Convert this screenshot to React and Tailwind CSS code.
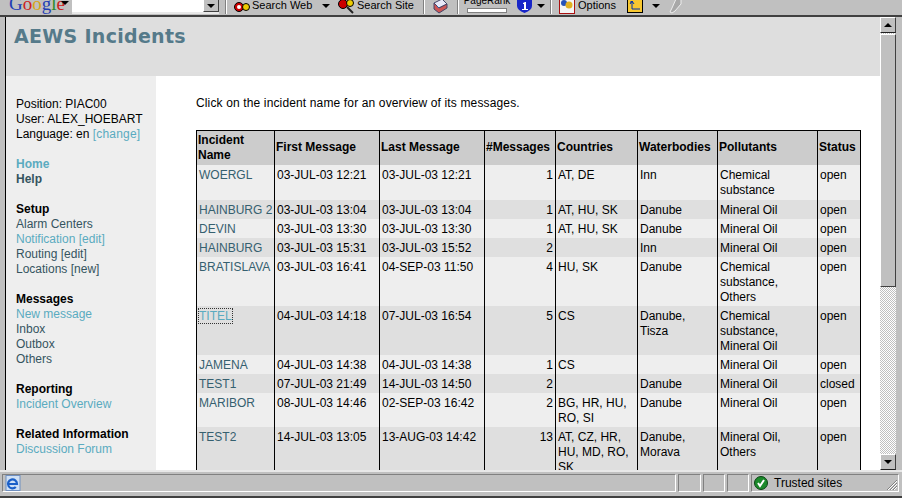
const rows = [
  { name: 'WOERGL', first: '03-JUL-03 12:21', last: '03-JUL-03 12:21', count: 1, countries: 'AT, DE', water: 'Inn', poll: ['Chemical', 'substance'], status: 'open', h: 'h-[35px]' },
  { name: 'HAINBURG 2', first: '03-JUL-03 13:04', last: '03-JUL-03 13:04', count: 1, countries: 'AT, HU, SK', water: 'Danube', poll: ['Mineral Oil'], status: 'open', h: 'h-[19px]' },
  { name: 'DEVIN', first: '03-JUL-03 13:30', last: '03-JUL-03 13:30', count: 1, countries: 'AT, HU, SK', water: 'Danube', poll: ['Mineral Oil'], status: 'open', h: 'h-[19px]' },
  { name: 'HAINBURG', first: '03-JUL-03 15:31', last: '03-JUL-03 15:52', count: 2, countries: '', water: 'Inn', poll: ['Mineral Oil'], status: 'open', h: 'h-[19px]' },
  { name: 'BRATISLAVA', first: '03-JUL-03 16:41', last: '04-SEP-03 11:50', count: 4, countries: 'HU, SK', water: 'Danube', poll: ['Chemical', 'substance,', 'Others'], status: 'open', h: 'h-[49px]' },
  { name: 'TITEL', first: '04-JUL-03 14:18', last: '07-JUL-03 16:54', count: 5, countries: 'CS', water: 'Danube, Tisza', poll: ['Chemical', 'substance,', 'Mineral Oil'], status: 'open', h: 'h-[49px]', focus: true },
  { name: 'JAMENA', first: '04-JUL-03 14:38', last: '04-JUL-03 14:38', count: 1, countries: 'CS', water: '', poll: ['Mineral Oil'], status: 'open', h: 'h-[19px]' },
  { name: 'TEST1', first: '07-JUL-03 21:49', last: '14-JUL-03 14:50', count: 2, countries: '', water: 'Danube', poll: ['Mineral Oil'], status: 'closed', h: 'h-[19px]' },
  { name: 'MARIBOR', first: '08-JUL-03 14:46', last: '02-SEP-03 16:42', count: 2, countries: 'BG, HR, HU, RO, SI', water: 'Danube', poll: ['Mineral Oil'], status: 'open', h: 'h-[34px]' },
  { name: 'TEST2', first: '14-JUL-03 13:05', last: '13-AUG-03 14:42', count: 13, countries: 'AT, CZ, HR, HU, MD, RO, SK', water: 'Danube, Morava', poll: ['Mineral Oil,', 'Others'], status: 'open', h: 'h-[64px]' },
];

function Sep({ className = '' }) {
  return <div className={`h-[14px] w-[2px] shrink-0 border-x border-l-[#808080] border-r-white ${className}`} />;
}

function Arrow({ className = '' }) {
  return <span className={`inline-block h-0 w-0 shrink-0 border-x-[4px] border-t-[4px] border-x-transparent border-t-black ${className}`} />;
}

function Toolbar() {
  return (
    <div className="h-[15px] shrink-0 overflow-hidden bg-[#c0c0c0] text-[11px] text-black">
      <div className="-mt-[7px] flex h-[22px] items-end pb-[1px]">
        <div className="ml-[9px] h-[20px] w-[52px] shrink-0 font-['Liberation_Serif',serif] text-[19px] leading-[20px]">
          <span className="text-[#1f3fb5]">G</span>
          <span className="text-[#c22]">o</span>
          <span className="text-[#d8a514]">o</span>
          <span className="text-[#1f3fb5]">g</span>
          <span className="text-[#2a8a2a]">l</span>
          <span className="text-[#c22]">e</span>
        </div>
        <Arrow className="mb-[9px]" />
        <div className="ml-[3px] flex h-[21px] w-[147px] justify-end border-b-2 border-[#e8e8e8] bg-white">
          <div className="flex w-[16px] items-center justify-center border border-b-[#404040] border-r-[#404040] border-l-white border-t-white bg-[#c0c0c0] pt-[6px]">
            <Arrow />
          </div>
        </div>
        <Sep className="ml-[6px]" />
        <svg viewBox="0 0 16 14" className="ml-[7px] mb-[1px] h-[14px] w-[16px]">
          <circle cx="5" cy="8" r="4.5" fill="#c00" stroke="#000" />
          <circle cx="12" cy="8" r="3.5" fill="#ec0" stroke="#000" />
          <circle cx="5" cy="8" r="2" fill="#fff" />
        </svg>
        <span className="ml-[2px] mb-[2px] w-[68px] font-['Liberation_Sans',sans-serif] leading-[14px]">Search Web</span>
        <Arrow className="ml-[2px] mb-[6px]" />
        <svg viewBox="0 0 18 16" className="ml-[8px] h-[16px] w-[18px]">
          <circle cx="5" cy="6" r="4.5" fill="#c00" stroke="#000" />
          <circle cx="12" cy="5" r="3.5" fill="#ec0" stroke="#000" />
          <path d="M9 9l6 6" stroke="#222" strokeWidth="2" />
        </svg>
        <span className="ml-[1px] mb-[2px] w-[64px] font-['Liberation_Sans',sans-serif] leading-[14px]">Search Site</span>
        <Sep className="ml-[2px]" />
        <svg viewBox="0 0 16 16" className="ml-[7px] h-[16px] w-[16px]">
          <path d="M2 5l8-4 5 5-8 4z" fill="#e8e8f8" stroke="#446" />
          <path d="M2 5v6l5 4 8-5V6l-8 4z" fill="#c55" stroke="#446" />
          <path d="M5 8l2 2" stroke="#26a" />
        </svg>
        <Sep className="ml-[9px]" />
        <div className="ml-[8px] flex h-[20px] w-[40px] shrink-0 flex-col items-center">
          <span className="h-[14px] whitespace-nowrap font-['Liberation_Sans',sans-serif] text-[10px] leading-[13px]">PageRank</span>
          <span className="h-[5px] w-[40px] border border-[#808080] bg-white" />
        </div>
        <svg viewBox="0 0 15 14" className="ml-[10px] mb-[1px] h-[14px] w-[15px]">
          <path d="M0 0h15v7q0 4-7.5 7Q0 11 0 7z" fill="#1826c8" />
          <path d="M6 4l2-1h1v7h2v1H5v-1h2V5H6z" fill="#fff" />
        </svg>
        <Arrow className="ml-[5px] mb-[6px]" />
        <Sep className="ml-[5px]" />
        <svg viewBox="0 0 16 16" className="ml-[7px] h-[16px] w-[16px]">
          <rect x="0.5" y="0.5" width="15" height="15" fill="#f4f4f4" stroke="#a11" />
          <circle cx="5" cy="5" r="3" fill="#2452b8" />
          <circle cx="10" cy="7" r="3.5" fill="#e0b020" />
        </svg>
        <span className="ml-[3px] mb-[2px] w-[39px] font-['Liberation_Sans',sans-serif] leading-[14px]">Options</span>
        <svg viewBox="0 0 16 16" className="ml-[10px] h-[16px] w-[16px]">
          <rect x="0.5" y="0.5" width="15" height="14" fill="#f8c830" stroke="#000" />
          <path d="M3 4h3M5 3v8h8M3 6l2-3 2 3" stroke="#03a" fill="none" />
        </svg>
        <Arrow className="ml-[9px] mb-[6px]" />
        <svg viewBox="0 0 16 16" className="ml-[7px] h-[16px] w-[16px]">
          <path d="M9 1h5v5l-6 7-3 2-2-1 2-4z" fill="#a8a8a8" stroke="#eee" />
        </svg>
      </div>
    </div>
  );
}

function ScrollBar() {
  const btn = 'flex h-[16px] w-[16px] shrink-0 items-center justify-center border border-b-[#202020] border-r-[#404040] border-l-white border-t-white bg-[#c0c0c0]';
  return (
    <div className="flex w-[16px] shrink-0 flex-col bg-[repeating-conic-gradient(#c0c0c0_0_25%,#fff_0_50%)] bg-[length:2px_2px]">
      <div className={btn}>
        <span className="h-0 w-0 border-x-[4px] border-b-[4px] border-x-transparent border-b-black" />
      </div>
      <div className="mt-[1px] h-[253px] w-[16px] border border-b-[#404040] border-r-[#404040] border-l-white border-t-white bg-[#c0c0c0]" />
      <div className="flex-1" />
      <div className={btn}>
        <Arrow />
      </div>
    </div>
  );
}

function NavGroup({ title, children }) {
  return (
    <div className="mb-[15px]">
      {title && <div className="font-bold text-black">{title}</div>}
      {children}
    </div>
  );
}

function Sidebar() {
  const dark = 'text-[#35545f]';
  const light = 'text-[#5aabc0]';
  return (
    <div className="w-[150px] shrink-0 bg-[#eeeeee] pl-[10px] pt-[21px] font-['Liberation_Sans',sans-serif] text-[12px] leading-[15px] text-black">
      <div className="mb-[15px]">
        <div>Position: PIAC00</div>
        <div>User: ALEX_HOEBART</div>
        <div>Language: en <span className={`tracking-[0.2px] ${light}`}>[change]</span></div>
      </div>
      <NavGroup>
        <div className={`font-bold ${light}`}>Home</div>
        <div className={`font-bold ${dark}`}>Help</div>
      </NavGroup>
      <NavGroup title="Setup">
        <div className={dark}>Alarm Centers</div>
        <div className={light}>Notification [edit]</div>
        <div className={dark}>Routing [edit]</div>
        <div className={dark}>Locations [new]</div>
      </NavGroup>
      <NavGroup title="Messages">
        <div className={light}>New message</div>
        <div className={dark}>Inbox</div>
        <div className={dark}>Outbox</div>
        <div className={dark}>Others</div>
      </NavGroup>
      <NavGroup title="Reporting">
        <div className={light}>Incident Overview</div>
      </NavGroup>
      <NavGroup title="Related Information">
        <div className={light}>Discussion Forum</div>
      </NavGroup>
    </div>
  );
}

function IncidentTable() {
  const th = 'border-x border-t border-black bg-[#cccccc] px-[1px] text-left align-middle font-bold leading-[15px]';
  const td = 'border-x border-black px-[2px] pt-[3px] align-top leading-[15px]';
  return (
    <table className="w-[664px] table-fixed border-collapse font-['Liberation_Sans',sans-serif] text-[12px] text-black">
      <colgroup>
        <col className="w-[78px]" />
        <col className="w-[105px]" />
        <col className="w-[105px]" />
        <col className="w-[71px]" />
        <col className="w-[82px]" />
        <col className="w-[80px]" />
        <col className="w-[100px]" />
        <col className="w-[43px]" />
      </colgroup>
      <thead>
        <tr className="h-[34px]">
          <th className={th}>Incident<br />Name</th>
          <th className={th}>First Message</th>
          <th className={th}>Last Message</th>
          <th className={th}>#Messages</th>
          <th className={th}>Countries</th>
          <th className={th}>Waterbodies</th>
          <th className={th}>Pollutants</th>
          <th className={th}>Status</th>
        </tr>
      </thead>
      <tbody>
        {rows.map((r, i) => (
          <tr key={r.name} className={`${r.h} ${i % 2 ? 'bg-[#dfdfdf]' : 'bg-[#eeeeee]'}`}>
            <td className={td}>
              {r.focus
                ? <span className="outline-1 outline-dotted outline-[#333] text-[#5aabc0]">{r.name}</span>
                : <span className="whitespace-nowrap text-[#35606f]">{r.name}</span>}
            </td>
            <td className={td}>{r.first}</td>
            <td className={td}>{r.last}</td>
            <td className={`${td} text-right`}>{r.count}</td>
            <td className={td}>{r.countries}</td>
            <td className={td}>{r.water}</td>
            <td className={td}>{r.poll.map((p) => <div key={p}>{p}</div>)}</td>
            <td className={td}>{r.status}</td>
          </tr>
        ))}
      </tbody>
    </table>
  );
}

function StatusBar() {
  const pane = 'h-[18px] border border-b-white border-r-white border-l-[#808080] border-t-[#808080]';
  return (
    <div className="flex h-[26px] shrink-0 items-start border-b-2 border-b-[#404040] bg-[#c0c0c0] pt-[2px] pl-[2px] pr-[3px] font-['Liberation_Sans',sans-serif] text-[12px] text-black">
      <div className={`${pane} flex flex-1 items-center pl-[2px]`}>
        <svg viewBox="0 0 16 16" className="h-[16px] w-[16px]">
          <rect x="1" y="0.5" width="14" height="15" fill="#cfe0f5" stroke="#6f8fc0" />
          <path d="M3 9h9a4.5 4.5 0 1 0-1.2 3" fill="none" stroke="#1a5fc8" strokeWidth="2.2" />
        </svg>
      </div>
      <div className={`${pane} ml-[2px] w-[23px]`} />
      <div className={`${pane} ml-[2px] w-[22px]`} />
      <div className={`${pane} ml-[2px] w-[22px]`} />
      <div className={`${pane} relative ml-[2px] flex w-[148px] items-center pl-[2px]`}>
        <svg viewBox="0 0 14 14" className="h-[14px] w-[14px]">
          <circle cx="7" cy="7" r="6.5" fill="#1c8a2c" stroke="#0b4414" />
          <path d="M4 7l2 3 4-6" fill="none" stroke="#fff" strokeWidth="2" />
        </svg>
        <span className="ml-[6px]">Trusted sites</span>
        <svg viewBox="0 0 12 12" className="absolute bottom-0 right-0 h-[12px] w-[12px]">
          <path d="M11 1L1 11M11 4L4 11M11 7L7 11" stroke="#808080" />
          <path d="M11 2L2 11M11 5L5 11M11 8L8 11" stroke="#fff" />
        </svg>
      </div>
    </div>
  );
}

export default function App() {
  return (
    <div className="flex h-[498px] w-[902px] flex-col overflow-hidden bg-[#c0c0c0]">
      <Toolbar />
      <div className="flex min-h-0 flex-1 border-y-2 border-b-[#e8e8e8] border-t-[#404040] pl-[5px] pr-[6px]">
        <div className="flex min-w-0 flex-1 flex-col border-l border-black bg-white">
          <div className="h-[59px] shrink-0 bg-[#dedede] pl-[8px] pt-[7px] font-['DejaVu_Sans',sans-serif] text-[19px] font-bold leading-[24px] tracking-[0.3px] text-[#557a8a]">
            AEWS Incidents
          </div>
          <div className="flex min-h-0 flex-1 overflow-hidden">
            <Sidebar />
            <div className="pl-[40px] pt-[20px]">
              <p className="mb-[19px] font-['Liberation_Sans',sans-serif] text-[12px] leading-[15px] tracking-[0.14px] text-black">
                Click on the incident name for an overview of its messages.
              </p>
              <IncidentTable />
            </div>
          </div>
        </div>
        <ScrollBar />
      </div>
      <StatusBar />
    </div>
  );
}
